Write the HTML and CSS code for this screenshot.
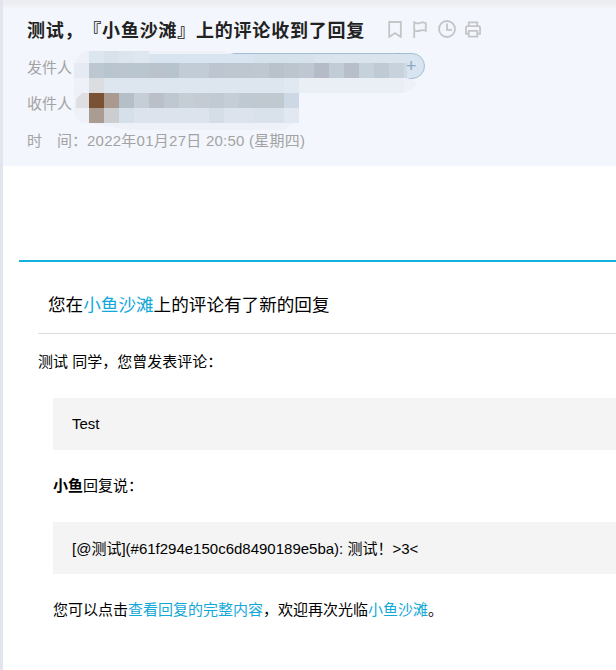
FILE: index.html
```html
<!DOCTYPE html>
<html lang="zh-CN">
<head>
<meta charset="utf-8">
<title>邮件</title>
<link rel="stylesheet" href="styles.css">
</head>
<body>
<div class="mail">
  <header class="head">
    <div class="subject">
      <h1>测试，『小鱼沙滩』上的评论收到了回复</h1>
      <div class="tools">
        <svg class="tool" width="14" height="17" viewBox="0 0 14 17"><path d="M1.200 1h11.600v15L7 12l-5.800 4z"/></svg>
        <svg class="tool" width="14" height="17" viewBox="0 0 14 17"><path d="M1.200 17V1.200c2.500 1.600 4 1.600 5.600 .8s3.500-1 6 .2v7.600c-2.500-1.200-4-1-6-.2s-3.300 .8-5.600-.4"/></svg>
        <svg class="tool" width="18" height="18" viewBox="0 0 18 18"><circle cx="9" cy="9" r="8"/><path d="M9 3.500V9.800h5"/></svg>
        <svg class="tool print" width="16" height="17" viewBox="0 0 17 17"><path d="M4 5V1h9v4M4 13H1V6.500A1.500 1.500 0 0 1 2.500 5h12A1.500 1.500 0 0 1 16 6.500V13h-3M4 10h9v6H4z"/></svg>
      </div>
    </div>
    <div class="row sender">
      <span class="label">发件人：</span>
      <span class="pill"><span class="pill-name"></span><span class="pill-add">+</span></span>
    </div>
    <div class="row receiver"><span class="label">收件人：</span></div>
    <div class="row date"><span class="label">时&emsp;间：</span><span class="date-value">2022年01月27日 20:50 (星期四)</span></div>
  </header>

  <main class="body">
    <section class="card">
      <h2 class="card-title">您在<a>小鱼沙滩</a>上的评论有了新的回复</h2>
      <div class="card-body">
        <p class="greet">测试 同学，您曾发表评论：</p>
        <div class="inner">
          <div class="quote">Test</div>
          <p class="who"><strong>小鱼</strong>回复说：</p>
          <div class="quote">[@测试](#61f294e150c6d8490189e5ba): 测试！&gt;3&lt;</div>
          <p class="foot">您可以点击<a>查看回复的完整内容</a>，欢迎再次光临<a>小鱼沙滩</a>。</p>
        </div>
      </div>
    </section>
  </main>
</div>

<svg class="mosaic" width="616" height="170" viewBox="0 0 616 170" aria-hidden="true">
  <path fill="#eef1f7" d="M89 51H220l60 12H404V78c10 0 22 6 0 15H299V93h-1v30h-4l-10 7H130l-41-7H86c-8 0-12-6-12-13V66c0-6 8-15 15-15z"/>
  <path fill="#e6ebf3" d="M89 63H74v15h15z"/>
  <path fill="#dddfe3" d="M89 93H82l-6 6v9h13z"/>
  <g>
    <rect x="89" y="51" width="15" height="12" fill="#dce6ef"/><rect x="104" y="51" width="15" height="12" fill="#d9e1ea"/><rect x="119" y="51" width="15" height="12" fill="#dce5ee"/><rect x="134" y="51" width="15" height="12" fill="#dee6ee"/><rect x="149" y="54" width="105" height="9" fill="#d8e4ef"/><rect x="254" y="54" width="60" height="9" fill="#d6e2eb"/><rect x="314" y="54" width="90" height="9" fill="#d9e4ed"/>
    <rect x="89" y="63" width="15" height="15" fill="#bcc7d1"/><rect x="104" y="63" width="15" height="15" fill="#b8c4ce"/><rect x="119" y="63" width="15" height="15" fill="#bac5cf"/><rect x="134" y="63" width="15" height="15" fill="#b9c5cf"/><rect x="149" y="63" width="15" height="15" fill="#bac2cc"/><rect x="164" y="63" width="15" height="15" fill="#b7c3cd"/><rect x="179" y="63" width="15" height="15" fill="#c1ccd6"/><rect x="194" y="63" width="15" height="15" fill="#c2ccd6"/><rect x="209" y="63" width="15" height="15" fill="#bdc6d0"/><rect x="224" y="63" width="15" height="15" fill="#bec7d0"/><rect x="239" y="63" width="15" height="15" fill="#bec6cf"/><rect x="254" y="63" width="15" height="15" fill="#bfc8d1"/><rect x="269" y="63" width="15" height="15" fill="#b9c2cb"/><rect x="284" y="63" width="15" height="15" fill="#bcc5ce"/><rect x="299" y="63" width="15" height="15" fill="#bfc8d2"/><rect x="314" y="63" width="15" height="15" fill="#b5bbc7"/><rect x="329" y="63" width="15" height="15" fill="#c1ccd6"/><rect x="344" y="63" width="15" height="15" fill="#b9bfc9"/><rect x="359" y="63" width="15" height="15" fill="#c5d2dc"/><rect x="374" y="63" width="15" height="15" fill="#c0cad4"/><rect x="389" y="63" width="15" height="15" fill="#c7d2dc"/><rect x="404" y="63" width="3" height="15" fill="#cddbe7"/>
    <rect x="89" y="78" width="15" height="15" fill="#dcdde1"/><rect x="104" y="78" width="195" height="15" fill="#dde6ef"/><rect x="284" y="78" width="15" height="15" fill="#e0e8f1"/><rect x="299" y="78" width="105" height="15" fill="#eaeff5"/>
    <rect x="89" y="93" width="15" height="15" fill="#7b5133"/><rect x="104" y="93" width="15" height="15" fill="#a9998e"/><rect x="119" y="93" width="15" height="15" fill="#b4bfc8"/><rect x="134" y="93" width="15" height="15" fill="#c5ced7"/><rect x="149" y="93" width="15" height="15" fill="#bbc0c8"/><rect x="164" y="93" width="15" height="15" fill="#bfc7d0"/><rect x="179" y="93" width="15" height="15" fill="#c5cdd5"/><rect x="194" y="93" width="15" height="15" fill="#c4cbd3"/><rect x="209" y="93" width="15" height="15" fill="#c1cad2"/><rect x="224" y="93" width="15" height="15" fill="#c5ced6"/><rect x="239" y="93" width="15" height="15" fill="#bfc9d1"/><rect x="254" y="93" width="30" height="15" fill="#c1c9d0"/><rect x="284" y="93" width="15" height="15" fill="#ccd9e5"/>
    <rect x="89" y="108" width="15" height="15" fill="#ab9c93"/><rect x="104" y="108" width="15" height="15" fill="#cbcdd0"/><rect x="119" y="108" width="15" height="15" fill="#d6e0ea"/><rect x="134" y="108" width="120" height="15" fill="#dce3ec"/><rect x="209" y="108" width="15" height="15" fill="#d5dde7"/><rect x="254" y="108" width="30" height="15" fill="#d9e2eb"/><rect x="284" y="108" width="15" height="15" fill="#e1e8f1"/>
  </g>
</svg>
</body>
</html>
```

FILE: styles.css
```css
* { box-sizing: border-box; }
html, body { margin: 0; height: 100%; overflow: hidden; }
body {
  position: relative;
  background: #fff;
  color: #000;
  font-family: "Liberation Sans", "Noto Sans CJK SC", sans-serif;
  font-size: 15px;
  text-spacing-trim: space-all;
}
.mail {
  width: 760px;
  min-height: 670px;
  border-left: 3px solid #e1e5ee;
}
.head {
  height: 166px;
  padding: 17px 0 0 24px;
  background: linear-gradient(#eaecf0 0, #eceef2 4px, #f3f6fc 9px);
  color: #a3a3a3;
  font-size: 15px;
}
.subject { display: flex; align-items: center; height: 24px; margin-bottom: 12px; }
.subject h1 {
  margin: 0;
  font-size: 18px;
  font-weight: 700;
  letter-spacing: 0.78px;
  color: #222;
  white-space: nowrap;
}
.tools { display: flex; align-items: center; gap: 11px; margin-left: 23px; }
.tool { fill: none; stroke: #c4c5c7; stroke-width: 1.8; }
.print { stroke-width: 1.9; margin-left: -2px; }
.row { display: flex; align-items: center; height: 26px; white-space: nowrap; }
.label { width: 60px; }
.sender { margin-bottom: 10px; }
.receiver { margin-bottom: 11px; }
.date-value { letter-spacing: 0.25px; }
.pill {
  display: flex;
  width: 338px;
  height: 26px;
  border: 1px solid #a5bdd7;
  border-radius: 13px;
  background: #d8e4ef;
}
.pill-name { flex: 1; }
.pill-add {
  width: 26px;
  margin-top: -1px;
  color: #8ea9c6;
  font-size: 19px;
  line-height: 26px;
  text-align: center;
  background: linear-gradient(#8ea9c6, #8ea9c6) left top / 1px 8px no-repeat;
}
.body { padding: 94px 0 0 16px; }
.card { border-top: 2px solid #12b0dc; }
.card-title {
  margin: 0 0 0 19px;
  padding: 30px 0 15px 10px;
  border-bottom: 1px solid #dcdcdc;
  font-size: 17.6px;
  line-height: 26px;
  font-weight: 400;
}
.card-title a, .foot a { color: #12a8d8; }
.card-body { padding: 0 0 0 19px; }
.greet { margin: 18px 0 0; line-height: 20px; }
.inner { padding-left: 15px; }
.quote {
  display: flex;
  align-items: center;
  height: 52px;
  padding: 0 0 2px 19px;
  background: #f4f4f4;
  white-space: pre;
}
.inner > .quote:first-child { margin-top: 26px; }
.who { margin: 26px 0 26px; line-height: 20px; }
.who strong { font-weight: 700; }
.foot { margin: 26px 0 0; line-height: 20px; }
.mosaic { position: absolute; left: 0; top: 0; }
```
